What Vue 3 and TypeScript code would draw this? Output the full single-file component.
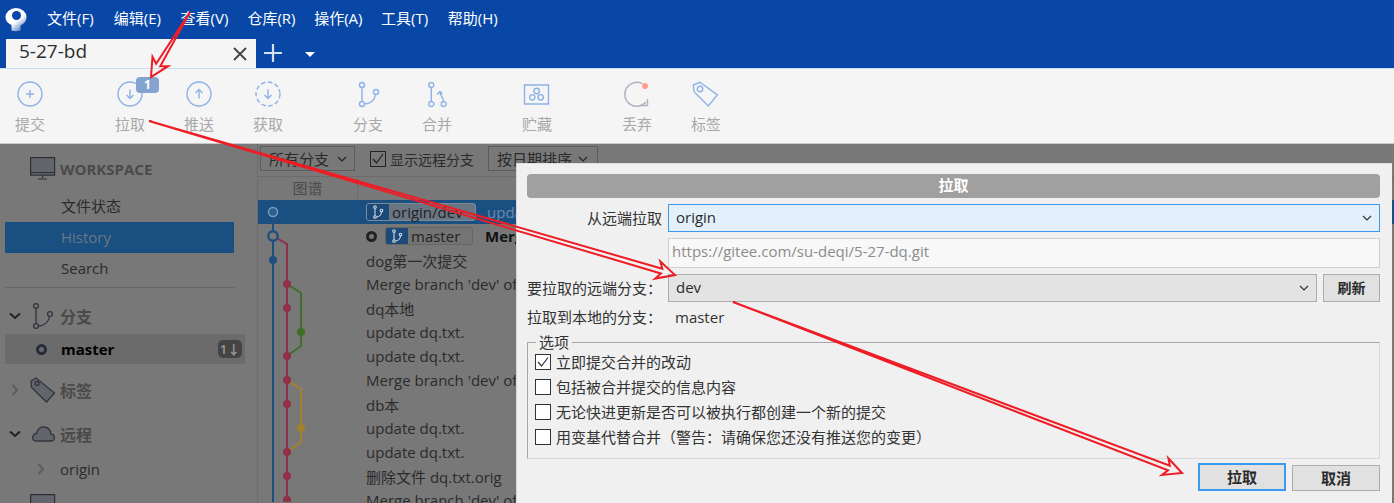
<script setup lang="ts">
type ToolItem = { label: string; icon: string; badge?: string };
type Row = { text: string; bold?: boolean; selected?: boolean; tag?: string; ring?: boolean };

const circle = (x: number, y: number, r: number) =>
  `M${x - r} ${y}a${r} ${r} 0 1 0 ${r * 2} 0a${r} ${r} 0 1 0 ${-r * 2} 0`;

const icons: Record<string, string> = {
  commit: circle(16, 16, 12) + "M16 12v8M12 16h8",
  pull: circle(16, 16, 12) + "M16 11.500v9M12.500 17l3.500 3.500 3.500-3.500",
  push: circle(16, 16, 12) + "M16 20.500v-9M12.500 15l3.500-3.500 3.500 3.500",
  fetch: "M16 11.500v9M12.500 17l3.500 3.500 3.500-3.500",
  branch:
    circle(10, 7, 2.500) + circle(24, 14, 2.500) + circle(10, 26, 2.500) + "M10 9.500v14M12.500 26c6 0 10.500-4 11-9.500",
  merge:
    circle(10.300, 7, 2.500) +
    circle(10.300, 26, 2.500) +
    circle(22.700, 26, 2.500) +
    "M10.300 9.500v14M22.700 23.500c0-3.500-3.700-5.500-3.700-9.500M16 16.500l3-3 2.500 2.500",
  stash:
    "M3.500 7h24v19h-24z" + circle(15.700, 13, 2.700) + circle(11.300, 19.300, 2.700) + circle(19.700, 19.300, 2.700),
  tag: "M3.300 7l6.700-2.700 17.300 12.700-9 11-14.300-14.300z" + circle(10, 11, 2.700),
};

const toolGroups: ToolItem[][] = [
  [{ label: "提交", icon: "commit" }],
  [
    { label: "拉取", icon: "pull", badge: "1" },
    { label: "推送", icon: "push" },
    { label: "获取", icon: "fetch" },
  ],
  [
    { label: "分支", icon: "branch" },
    { label: "合并", icon: "merge" },
  ],
  [{ label: "贮藏", icon: "stash" }],
  [
    { label: "丢弃", icon: "discard" },
    { label: "标签", icon: "tag" },
  ],
];

const menus = ["文件(F)", "编辑(E)", "查看(V)", "仓库(R)", "操作(A)", "工具(T)", "帮助(H)"];

// 对话框挡住了后面的提交信息, 这里只留露出来的部分
const rows: Row[] = [
  { text: "update", selected: true, tag: "origin/dev" },
  { text: "Merge", bold: true, tag: "master", ring: true },
  { text: "dog第一次提交" },
  { text: "Merge branch 'dev' of" },
  { text: "dq本地" },
  { text: "update dq.txt." },
  { text: "update dq.txt." },
  { text: "Merge branch 'dev' of" },
  { text: "db本" },
  { text: "update dq.txt." },
  { text: "update dq.txt." },
  { text: "删除文件 dq.txt.orig" },
  { text: "Merge branch 'dev' of" },
];

const redDots = [285, 309, 357, 381, 405, 453, 477, 501];

const options = [
  { text: "立即提交合并的改动", checked: true },
  { text: "包括被合并提交的信息内容", checked: false },
  { text: "无论快进更新是否可以被执行都创建一个新的提交", checked: false },
  { text: "用变基代替合并（警告：请确保您还没有推送您的变更）", checked: false },
];

// 手绘的空心箭头: 尾部收尖, 头部两侧带倒钩
const arrow = (x1: number, y1: number, x2: number, y2: number) => {
  const len = Math.hypot(x2 - x1, y2 - y1);
  const ux = (x2 - x1) / len;
  const uy = (y2 - y1) / len;
  const at = (back: number, side: number) =>
    `${(x2 - ux * back - uy * side).toFixed(1)},${(y2 - uy * back + ux * side).toFixed(1)}`;
  return [at(len, 0), at(14, -2.500), at(18, -9), at(0, 0), at(18, 9), at(14, 2.500)].join(" ");
};

const arrows = [
  arrow(190, 12, 151, 77),
  arrow(149, 121, 675, 275),
  arrow(733, 302, 1182, 473),
];
</script>

<template>
  <div class="app">
    <header class="titlebar">
      <svg class="logo" width="24" height="26" viewBox="0 0 24 26">
        <defs>
          <linearGradient id="tail" x1="0.200" y1="0.200" x2="0.750" y2="1">
            <stop offset="0.500" stop-color="#ffffff" />
            <stop offset="1" stop-color="#4d78bd" />
          </linearGradient>
        </defs>
        <path
          d="M1.500 9a10.500 9 0 0 1 21 0c0 4-2.500 7-6 8.500v5q-4 1.500-9 0v-5.500c-4-1.500-6-4.500-6-8z"
          fill="url(#tail)"
        />
        <circle cx="12.500" cy="7.500" r="4.500" fill="#0847a6" />
      </svg>
      <nav class="menu">
        <span v-for="m in menus" :key="m">{{ m }}</span>
      </nav>
    </header>

    <div class="tabbar">
      <div class="tab">
        <span class="tab-name">5-27-bd</span>
        <svg width="14" height="14" viewBox="0 0 14 14">
          <path d="M1 1l12 12M13 1L1 13" stroke="#444" stroke-width="1.800" />
        </svg>
      </div>
      <svg class="plus" width="20" height="20" viewBox="0 0 20 20">
        <path d="M10 1v18M1 10h18" stroke="#d5e0f0" stroke-width="2.200" />
      </svg>
      <span class="caret"></span>
    </div>

    <section class="toolbar">
      <div v-for="(group, i) in toolGroups" :key="i" class="tool-group">
        <div v-for="item in group" :key="item.label" class="tool">
          <svg width="32" height="32" viewBox="0 0 32 32" fill="none" stroke="#8db2e6" stroke-width="1.400">
            <template v-if="item.icon === 'fetch'">
              <circle cx="16" cy="16" r="12" stroke-dasharray="4.500 2.500" />
              <path :d="icons.fetch" />
            </template>
            <template v-else-if="item.icon === 'discard'">
              <path d="M21 5.500A12 12 0 1 0 25 24" stroke="#aeb3c0" />
              <path d="M26.500 21v6.500h-6.500" stroke="#aeb3c0" />
              <circle cx="24" cy="8" r="3" fill="#ff9d8c" stroke="none" />
            </template>
            <path v-else :d="icons[item.icon]" />
          </svg>
          <span class="tool-label">{{ item.label }}</span>
          <span v-if="item.badge" class="tool-badge">{{ item.badge }}</span>
        </div>
      </div>
    </section>

    <main class="body">
      <aside class="sidebar">
        <div class="side-head">
          <svg width="26" height="24" viewBox="0 0 26 24" fill="none" stroke="#2d2f36" stroke-width="1.200">
            <rect x="0.600" y="0.600" width="24" height="17.500" fill="#63656c" />
            <path d="M0.600 15.500h24M12.600 18v3M8 22h9" />
          </svg>
          <b>WORKSPACE</b>
        </div>
        <ul class="side-links">
          <li>文件状态</li>
          <li class="active">History</li>
          <li>Search</li>
        </ul>
        <div class="side-line"></div>

        <div class="section first">
          <svg class="chev" width="12" height="8" viewBox="0 0 12 8">
            <path d="M1 1.500l5 4.500 5-4.500" fill="none" stroke="#222" stroke-width="2" />
          </svg>
          <svg width="22" height="26" viewBox="0 0 22 26" fill="none" stroke="#33353c" stroke-width="1.300">
            <circle cx="4" cy="3" r="2.400" />
            <circle cx="18" cy="11" r="2.400" />
            <circle cx="4" cy="23" r="2.400" />
            <path d="M4 5.500v15M6.500 23c6 0 10.500-4.500 11-9.500" />
          </svg>
          <b>分支</b>
        </div>
        <div class="branch-row">
          <span class="ring"></span>
          <b>master</b>
          <span class="ahead">1↓</span>
        </div>

        <div class="section tags">
          <svg class="chev" width="8" height="12" viewBox="0 0 8 12">
            <path d="M1.500 1l4.500 5-4.500 5" fill="none" stroke="#5d5d5d" stroke-width="2" />
          </svg>
          <svg width="26" height="26" viewBox="0 0 26 26" fill="none" stroke="#33353c" stroke-width="1.300">
            <path d="M1 4l5-3 18.500 15-8 9L1.500 10.500z" fill="#63656c" />
            <circle cx="7" cy="6.500" r="2" />
          </svg>
          <b>标签</b>
        </div>

        <div class="section remote">
          <svg class="chev" width="12" height="8" viewBox="0 0 12 8">
            <path d="M1 1.500l5 4.500 5-4.500" fill="none" stroke="#222" stroke-width="2" />
          </svg>
          <svg width="24" height="16" viewBox="0 0 24 16" fill="none" stroke="#33353c" stroke-width="1.300">
            <path d="M5 15h15c4.500 0 4.500-6.500 0-7-.5-4-3-7-7.500-7-3.500 0-6 2.500-6.500 6C1 8 0 15 5 15z" fill="#63656c" />
          </svg>
          <b>远程</b>
        </div>
        <div class="remote-row">
          <svg width="8" height="12" viewBox="0 0 8 12">
            <path d="M1.500 1l4.500 5-4.500 5" fill="none" stroke="#5d5d5d" stroke-width="2" />
          </svg>
          <span>origin</span>
        </div>

        <div class="section stash">
          <svg width="26" height="24" viewBox="0 0 26 24" fill="none" stroke="#2d2f36" stroke-width="1.200">
            <rect x="0.600" y="0.600" width="24" height="17.500" fill="#63656c" />
          </svg>
        </div>
      </aside>

      <section class="history">
        <div class="filters">
          <div class="select all">所有分支
            <svg width="10" height="6" viewBox="0 0 10 6"><path d="M1 1l4 4 4-4" fill="none" stroke="#222" stroke-width="1.200" /></svg>
          </div>
          <label class="show-remote">
            <span class="check-dark">
              <svg width="14" height="14" viewBox="0 0 14 14"><path d="M2 7l3.500 4L12 2" fill="none" stroke="#222" stroke-width="1.200" /></svg>
            </span>
            显示远程分支
          </label>
          <div class="select order">按日期排序
            <svg width="10" height="6" viewBox="0 0 10 6"><path d="M1 1l4 4 4-4" fill="none" stroke="#222" stroke-width="1.200" /></svg>
          </div>
        </div>
        <div class="columns">
          <span class="graph-head">图谱</span>
          <span class="desc-head"></span>
        </div>
        <div class="log">
          <svg class="graph" width="100" height="302" viewBox="258 201 100 302" fill="none" stroke-width="2">
            <path d="M273 213V503" stroke="#1d5080" />
            <path d="M273 237l14 8V503" stroke="#8f3048" />
            <path d="M287 285l14 9v53l-14 10" stroke="#3f6f25" />
            <path d="M287 381l14 9v53l-14 10" stroke="#a5802a" />
            <circle cx="273" cy="213" r="4.500" fill="#2a5f95" stroke="#7f99b5" stroke-width="1.500" />
            <circle cx="273" cy="237" r="4.700" fill="#787878" stroke="#1d5080" stroke-width="2.400" />
            <circle cx="273" cy="261" r="4" fill="#1d5080" stroke="none" />
            <circle v-for="y in redDots" :key="y" cx="287" :cy="y" r="4" fill="#8f3048" stroke="none" />
            <circle cx="301" cy="333" r="4" fill="#3f6f25" stroke="none" />
            <circle cx="301" cy="429" r="4" fill="#a5802a" stroke="none" />
          </svg>
          <ul class="commits">
            <li v-for="(row, i) in rows" :key="i" class="commit" :class="{ selected: row.selected }">
              <div class="commit-inner">
                <span v-if="row.ring" class="commit-ring"></span>
                <span v-if="row.tag" class="ref" :class="{ wide: row.selected }">
                  <i>
                    <svg width="12" height="14" viewBox="0 0 12 14" fill="none" stroke="#cfd8e4" stroke-width="1.100">
                      <circle cx="3" cy="2" r="1.300" />
                      <circle cx="9.500" cy="5.500" r="1.300" />
                      <circle cx="3" cy="12" r="1.300" />
                      <path d="M3 3.300v7.400M4.300 12c3 0 5-2.500 5.200-5" />
                    </svg>
                  </i>
                  <em>{{ row.tag }}</em>
                </span>
                <span class="msg" :class="{ strong: row.bold }">{{ row.text }}</span>
              </div>
            </li>
          </ul>
        </div>
      </section>
    </main>

    <div class="dialog">
      <h2 class="dialog-title">拉取</h2>
      <div class="form">
        <label class="right">从远端拉取</label>
        <div class="combo focused">
          <span>origin</span>
          <svg width="10" height="6" viewBox="0 0 10 6"><path d="M1 1l4 4 4-4" fill="none" stroke="#333" stroke-width="1.200" /></svg>
        </div>

        <span></span>
        <div class="url">https://gitee.com/su-deqi/5-27-dq.git</div>

        <label>要拉取的远端分支：</label>
        <div class="combo-row">
          <div class="combo">
            <span>dev</span>
            <svg width="10" height="6" viewBox="0 0 10 6"><path d="M1 1l4 4 4-4" fill="none" stroke="#333" stroke-width="1.200" /></svg>
          </div>
          <button class="btn refresh" type="button">刷新</button>
        </div>

        <label>拉取到本地的分支：</label>
        <div class="local-value">master</div>
      </div>

      <fieldset class="opts">
        <legend>选项</legend>
        <div v-for="o in options" :key="o.text" class="opt">
          <span class="box">
            <svg v-if="o.checked" width="14" height="14" viewBox="0 0 14 14">
              <path d="M2 7l3.500 4L12 2.500" fill="none" stroke="#333" stroke-width="1.200" />
            </svg>
          </span>
          <span>{{ o.text }}</span>
        </div>
      </fieldset>

      <div class="actions">
        <button class="btn primary" type="button">拉取</button>
        <button class="btn" type="button">取消</button>
      </div>
    </div>

    <svg class="marks" width="1394" height="503" viewBox="0 0 1394 503">
      <polygon
        v-for="(pts, i) in arrows"
        :key="i"
        :points="pts"
        fill="none"
        stroke="#ee1c25"
        stroke-width="2"
        stroke-linejoin="miter"
      />
    </svg>
  </div>
</template>

<style scoped>
.app {
  position: relative;
  width: 1394px;
  height: 503px;
  overflow: hidden;
  display: flex;
  flex-direction: column;
  font-family: "Open Sans", "Noto Sans CJK SC", sans-serif;
  font-size: 15px;
  color: #333;
}
.titlebar {
  height: 38px;
  flex: none;
  background: #0847a6;
  display: flex;
  align-items: center;
  padding-left: 4px;
}
.logo {
  margin-top: 4px;
}
.menu {
  display: flex;
  gap: 16.800px;
  margin: -4px 0 0 19px;
  color: #fff;
}
.menu span {
  width: 50px;
  white-space: nowrap;
}
.tabbar {
  height: 30px;
  flex: none;
  background: #0847a6;
  display: flex;
  align-items: center;
  padding-left: 6px;
}
.tab {
  width: 250px;
  height: 29px;
  margin-top: 1px;
  background: #f5f5f5;
  display: flex;
  align-items: center;
  justify-content: space-between;
  padding: 0 9px 0 13px;
  box-sizing: border-box;
  font-size: 19px;
  color: #2f2f2f;
}
.tab-name {
  margin-top: -5px;
}
.plus {
  margin-left: 7px;
}
.caret {
  margin-left: 22px;
  margin-top: 3px;
  border-left: 5px solid transparent;
  border-right: 5px solid transparent;
  border-top: 5px solid #fff;
}
.toolbar {
  height: 76px;
  flex: none;
  box-sizing: border-box;
  background: #f5f5f5;
  border-top: 1px solid #cddcf0;
  border-bottom: 1px solid #c8c8c8;
  display: flex;
  gap: 40px;
  padding-top: 9px;
}
.tool-group {
  display: flex;
  gap: 9px;
}
.tool {
  position: relative;
  width: 60px;
  display: flex;
  flex-direction: column;
  align-items: center;
  gap: 4px;
}
.tool-label {
  color: #a8a8a8;
  line-height: 20px;
}
.tool-badge {
  position: absolute;
  left: 36px;
  top: -1px;
  width: 23px;
  height: 16px;
  border-radius: 4px;
  background: #85a3d0;
  color: #fff;
  font-size: 12px;
  font-weight: 700;
  line-height: 16px;
  text-align: center;
}
.body {
  flex: 1;
  min-height: 0;
  display: flex;
  background: #787878;
  color: #2b2b2b;
}
.sidebar {
  width: 258px;
  flex: none;
  box-sizing: border-box;
  border-right: 1px solid #6c6c6c;
  overflow: hidden;
}
.side-head {
  display: flex;
  align-items: center;
  gap: 4px;
  height: 24px;
  margin-top: 13px;
  padding-left: 30px;
  color: #4a4a4a;
}
.side-links {
  list-style: none;
  margin: 10px 0 0;
  padding: 0;
}
.side-links li {
  width: 229px;
  height: 31px;
  margin-left: 5px;
  padding-left: 56px;
  box-sizing: border-box;
  line-height: 30px;
}
.side-links .active {
  background: #1a4f82;
  color: #6b7783;
}
.side-line {
  width: 230px;
  height: 1px;
  margin: 3px 0 0 5px;
  background: #666;
}
.section {
  display: flex;
  align-items: center;
  position: relative;
  padding-left: 32px;
  gap: 6px;
  color: #4a4a4a;
  font-size: 16px;
}
.chev {
  position: absolute;
  left: 9px;
}
.section.first {
  height: 26px;
  margin-top: 15px;
}
.section.tags {
  height: 26px;
  margin-top: 13px;
  padding-left: 30px;
  gap: 4px;
}
.section.tags .chev {
  left: 11px;
}
.section.remote {
  height: 22px;
  margin-top: 20px;
  padding-left: 31px;
  gap: 5px;
}
.section.stash {
  margin-top: 13px;
  padding-left: 30px;
}
.branch-row {
  display: flex;
  align-items: center;
  width: 240px;
  height: 30px;
  margin: 5px 0 0 5px;
  background: #6b6b6b;
  box-sizing: border-box;
  padding: 0 3px 0 31px;
  color: #000;
}
.ring {
  width: 5px;
  height: 5px;
  border: 3px solid #262a3a;
  border-radius: 50%;
  margin-right: 14px;
}
.ahead {
  margin-left: auto;
  width: 24px;
  height: 18px;
  border-radius: 5px;
  background: #444;
  color: #9a9a9a;
  font-size: 13px;
  font-weight: 600;
  line-height: 18px;
  text-align: center;
}
.remote-row {
  display: flex;
  align-items: center;
  gap: 15px;
  height: 24px;
  margin-top: 12px;
  padding-left: 37px;
}
.history {
  flex: 1;
  min-width: 0;
  display: flex;
  flex-direction: column;
}
.filters {
  height: 32px;
  flex: none;
  display: flex;
  align-items: center;
  padding-left: 2px;
  box-sizing: border-box;
}
.select {
  height: 25px;
  box-sizing: border-box;
  border: 1px solid #5c5c5c;
  display: flex;
  align-items: center;
  justify-content: space-between;
  padding: 0 9px 0 8px;
  margin-top: -3px;
}
.select.all {
  width: 95px;
  padding-right: 7px;
}
.select.order {
  width: 110px;
}
.show-remote {
  display: flex;
  align-items: center;
  gap: 4px;
  margin: -3px 14px 0 15px;
  font-size: 14px;
}
.check-dark {
  width: 16px;
  height: 16px;
  box-sizing: border-box;
  border: 1px solid #222;
  display: flex;
  align-items: center;
  justify-content: center;
}
.columns {
  height: 24px;
  flex: none;
  display: flex;
  border-top: 1px solid #6c6c6c;
  box-sizing: border-box;
}
.graph-head {
  width: 100px;
  box-sizing: border-box;
  text-align: center;
  color: #4c4c4c;
  line-height: 22px;
  border-right: 1px solid #6c6c6c;
}
.log {
  flex: 1;
  position: relative;
  display: flex;
  overflow: hidden;
}
.graph {
  position: absolute;
  left: 0;
  top: 0;
  z-index: 1;
}
.commits {
  list-style: none;
  flex: 1;
  margin: 0;
  padding: 0;
}
.commit {
  height: 24px;
}
.commit-inner {
  width: 258px;
  height: 24px;
  box-sizing: border-box;
  padding-left: 108px;
  display: flex;
  align-items: center;
  white-space: nowrap;
  overflow: hidden;
}
.commit.selected {
  background: #1a4f82;
  color: #6f89a6;
}
.commit-ring {
  width: 5px;
  height: 5px;
  border: 3px solid #222;
  border-radius: 50%;
  margin-right: 8px;
  flex: none;
}
.ref {
  display: flex;
  align-items: center;
  width: 88px;
  height: 18px;
  border: 1px solid #666;
  border-radius: 3px;
  background: #747474;
  box-sizing: border-box;
  margin-right: 12px;
  flex: none;
}
.ref.wide {
  width: 110px;
  background: #6a7582;
  border-color: #7b8b9b;
  margin-right: 11px;
}
.ref i {
  width: 22px;
  height: 16px;
  background: #1c4a78;
  border-radius: 2px 0 0 2px;
  display: flex;
  align-items: center;
  justify-content: center;
  flex: none;
}
.ref em {
  font-style: normal;
  padding-left: 3px;
  color: #222;
}
.msg.strong {
  font-weight: 700;
  color: #111;
}
.dialog {
  position: absolute;
  left: 516px;
  top: 163px;
  right: 2px;
  bottom: 0;
  box-sizing: border-box;
  background: #f0f0f0;
  border-top: 1px solid #e0e0e0;
  border-left: 1px solid #d8d8d8;
  padding: 10px 12px 0 10px;
  display: flex;
  flex-direction: column;
}
.dialog-title {
  margin: 0;
  height: 24px;
  border-radius: 4px;
  background: #a0a0a0;
  color: #fff;
  font-size: 15px;
  font-weight: 700;
  line-height: 22px;
  text-align: center;
}
.form {
  display: grid;
  grid-template-columns: 135px 1fr;
  column-gap: 6px;
  row-gap: 6px;
  margin-top: 6px;
  align-items: center;
  color: #333;
}
.form label {
  margin-top: -2px;
}
.form .right {
  text-align: right;
}
.combo {
  flex: 1;
  height: 28px;
  box-sizing: border-box;
  border: 1px solid #adadad;
  background: #e3e3e3;
  display: flex;
  align-items: center;
  justify-content: space-between;
  padding: 0 7px;
  color: #2b2b2b;
}
.combo span {
  margin-top: -2px;
}
.combo.focused {
  background: #e3f0fb;
  border-color: #3c99f0;
}
.combo-row {
  display: flex;
  gap: 6px;
}
.url {
  height: 30px;
  box-sizing: border-box;
  border: 1px solid #d0d0d0;
  background: #f8f8f8;
  color: #8c8c8c;
  padding-left: 3px;
  line-height: 24px;
}
.local-value {
  margin-top: -2px;
  padding-left: 7px;
  line-height: 20px;
}
.btn {
  width: 88px;
  height: 26px;
  box-sizing: border-box;
  border: 1px solid #adadad;
  background: #e1e1e1;
  color: #2b2b2b;
  font-family: inherit;
  font-size: 15px;
  font-weight: 600;
  padding: 0 0 2px;
}
.btn.refresh {
  width: 57px;
  height: 28px;
  font-size: 14px;
}
.btn.primary {
  height: 28px;
  border: 2px solid #3c99f0;
}
.opts {
  margin: 8px 0 0;
  padding: 0 0 0 7px;
  height: 124px;
  box-sizing: border-box;
  border: 1px solid #d8d8d8;
  border-left-color: #a8a8a8;
  border-top-color: #a8a8a8;
}
.opts legend {
  padding: 0 3px;
  margin: 0 0 -1px 1px;
  line-height: 15px;
  color: #333;
}
.opt {
  display: flex;
  align-items: center;
  gap: 5px;
  height: 25px;
  color: #333;
}
.box {
  width: 16px;
  height: 16px;
  box-sizing: border-box;
  border: 1px solid #333;
  background: #fff;
  display: flex;
  align-items: center;
  justify-content: center;
  flex: none;
}
.actions {
  display: flex;
  justify-content: flex-end;
  align-items: flex-end;
  gap: 6px;
  margin-top: 4px;
}
.marks {
  position: absolute;
  left: 0;
  top: 0;
  z-index: 5;
  pointer-events: none;
}
</style>

<style>
body {
  overflow: hidden;
}
</style>
